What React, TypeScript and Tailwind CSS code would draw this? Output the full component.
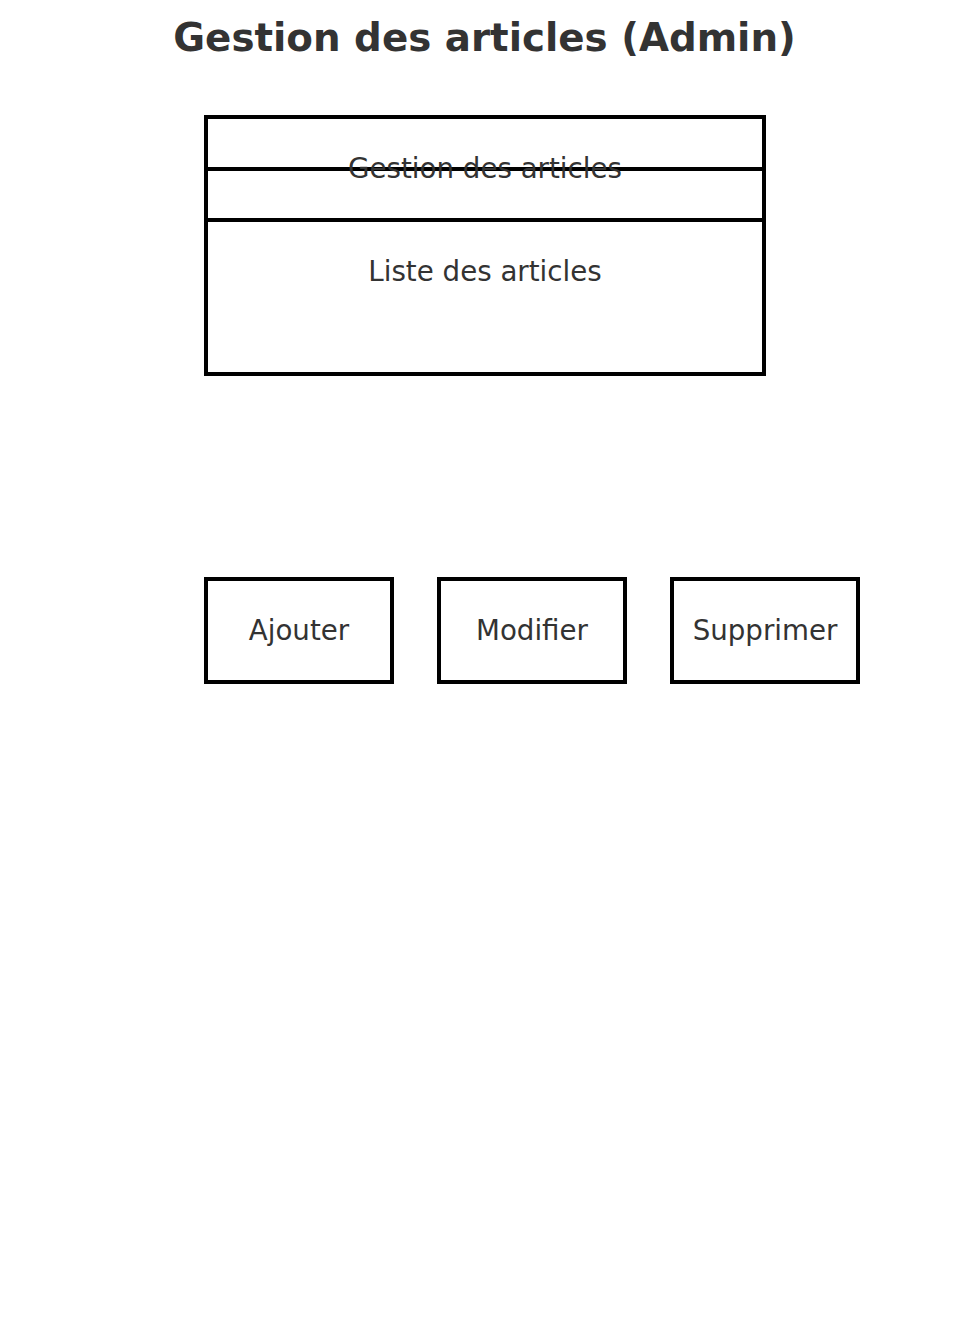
const actions = ["Ajouter", "Modifier", "Supprimer"];

export default function App() {
  return (
    <div className="w-[969px] h-[1318px] bg-white text-[#333333] font-['DejaVu_Sans',sans-serif]">
      <div className="h-[115px] pt-[19px]">
        <h1 className="text-center text-[38.8px] font-bold leading-none">
          Gestion des articles (Admin)
        </h1>
      </div>

      <div className="ml-[204px] w-[562px] h-[261px] border-4 border-black">
        <div className="h-[48px] pt-[36px] text-center text-[27.7px] leading-none">
          Gestion des articles
        </div>
        <div className="h-[55px] border-y-4 border-black" />
        <div className="pt-[36px] text-center text-[27.7px] leading-none">
          Liste des articles
        </div>
      </div>

      <div className="mt-[201px] ml-[204px] flex gap-[43px]">
        {actions.map((label) => (
          <div
            key={label}
            className="w-[190px] h-[107px] border-4 border-black flex items-center justify-center text-[27.7px] leading-none"
          >
            {label}
          </div>
        ))}
      </div>
    </div>
  );
}
